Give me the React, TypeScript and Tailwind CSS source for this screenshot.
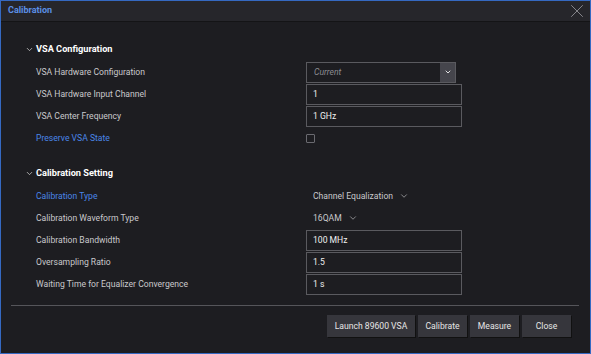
import { X, ChevronDown } from "lucide-react";

const font = { fontFamily: "Roboto, 'Liberation Sans', sans-serif" };

function Row({ label, blue, children }: { label: string; blue?: boolean; children?: React.ReactNode }) {
  return (
    <div className="grid grid-cols-[270px_160px] items-center h-[22px]">
      <span className={blue ? "text-[#4a86e8]" : "text-[#c9c9cc]"}>{label}</span>
      <div className="flex items-center">{children}</div>
    </div>
  );
}

function Field({ value }: { value: string }) {
  return (
    <div className="w-[156px] h-[21px] border border-[#5a5a5f] flex items-center px-[6px] text-[#f0f0f0]">
      {value}
    </div>
  );
}

function Plain({ value }: { value: string }) {
  return (
    <div className="flex items-center gap-[6px] pl-[7px] text-[#c9c9cc]">
      {value}
      <ChevronDown className="w-[10px] h-[10px] text-[#c9c9cc]" strokeWidth={1.5} />
    </div>
  );
}

function Section({ title, children }: { title: string; children: React.ReactNode }) {
  return (
    <div className="flex flex-col">
      <div className="flex items-center h-[24px] pl-[24px] gap-[2px] text-white font-bold text-[9.2px]">
        <ChevronDown className="w-[9px] h-[9px] text-[#d0d0d0]" strokeWidth={2} />
        <span>{title}</span>
      </div>
      <div className="flex flex-col pl-[35px]">{children}</div>
    </div>
  );
}

export default function App() {
  return (
    <div
      style={font}
      className="w-[591px] h-[354px] bg-[#1d1d21] border border-[#3569c2] flex flex-col text-[8.6px] overflow-hidden"
    >
      <div className="h-[21px] shrink-0 bg-[#26262b] border-b border-[#141416] flex items-center justify-between pl-[7px] pr-[2px]">
        <span className="text-[#5b8fe6] font-bold text-[9px]">Calibration</span>
        <X className="w-[22px] h-[22px] text-[#9a9aa0]" strokeWidth={0.9} />
      </div>

      <div className="flex flex-col pt-[15px]">
        <Section title="VSA Configuration">
          <Row label="VSA Hardware Configuration">
            <div className="w-[150px] h-[21px] border border-[#5a5a5f] flex">
              <div className="flex-1 flex items-center px-[7px] italic text-[#8c8c92]">Current</div>
              <div className="w-[15px] bg-[#45454c] flex items-center justify-center">
                <ChevronDown className="w-[8px] h-[8px] text-white" strokeWidth={2.5} />
              </div>
            </div>
          </Row>
          <Row label="VSA Hardware Input Channel">
            <Field value="1" />
          </Row>
          <Row label="VSA Center Frequency">
            <Field value="1 GHz" />
          </Row>
          <Row label="Preserve VSA State" blue>
            <div className="w-[9px] h-[9px] border border-[#6a6a70] rounded-[1px]" />
          </Row>
        </Section>

        <div className="h-[12px]" />

        <Section title="Calibration Setting">
          <Row label="Calibration Type" blue>
            <Plain value="Channel Equalization" />
          </Row>
          <Row label="Calibration Waveform Type">
            <Plain value="16QAM" />
          </Row>
          <Row label="Calibration Bandwidth">
            <Field value="100 MHz" />
          </Row>
          <Row label="Oversampling Ratio">
            <Field value="1.5" />
          </Row>
          <Row label="Waiting Time for Equalizer Convergence">
            <Field value="1 s" />
          </Row>
        </Section>
      </div>

      <div className="mt-[10px] ml-[10px] mr-[11px] h-px bg-[#55555a]" />

      <div className="flex justify-end gap-[3px] pr-[19px] pt-[9px]">
        {["Launch 89600 VSA", "Calibrate", "Measure", "Close"].map((b) => (
          <div
            key={b}
            className={`h-[22px] flex items-center justify-center bg-[#36363c] text-[#e6e6e6] shadow-[1px_1px_0_#111] ${
              b === "Launch 89600 VSA" ? "w-[88px]" : "w-[49px]"
            }`}
          >
            {b}
          </div>
        ))}
      </div>
    </div>
  );
}
